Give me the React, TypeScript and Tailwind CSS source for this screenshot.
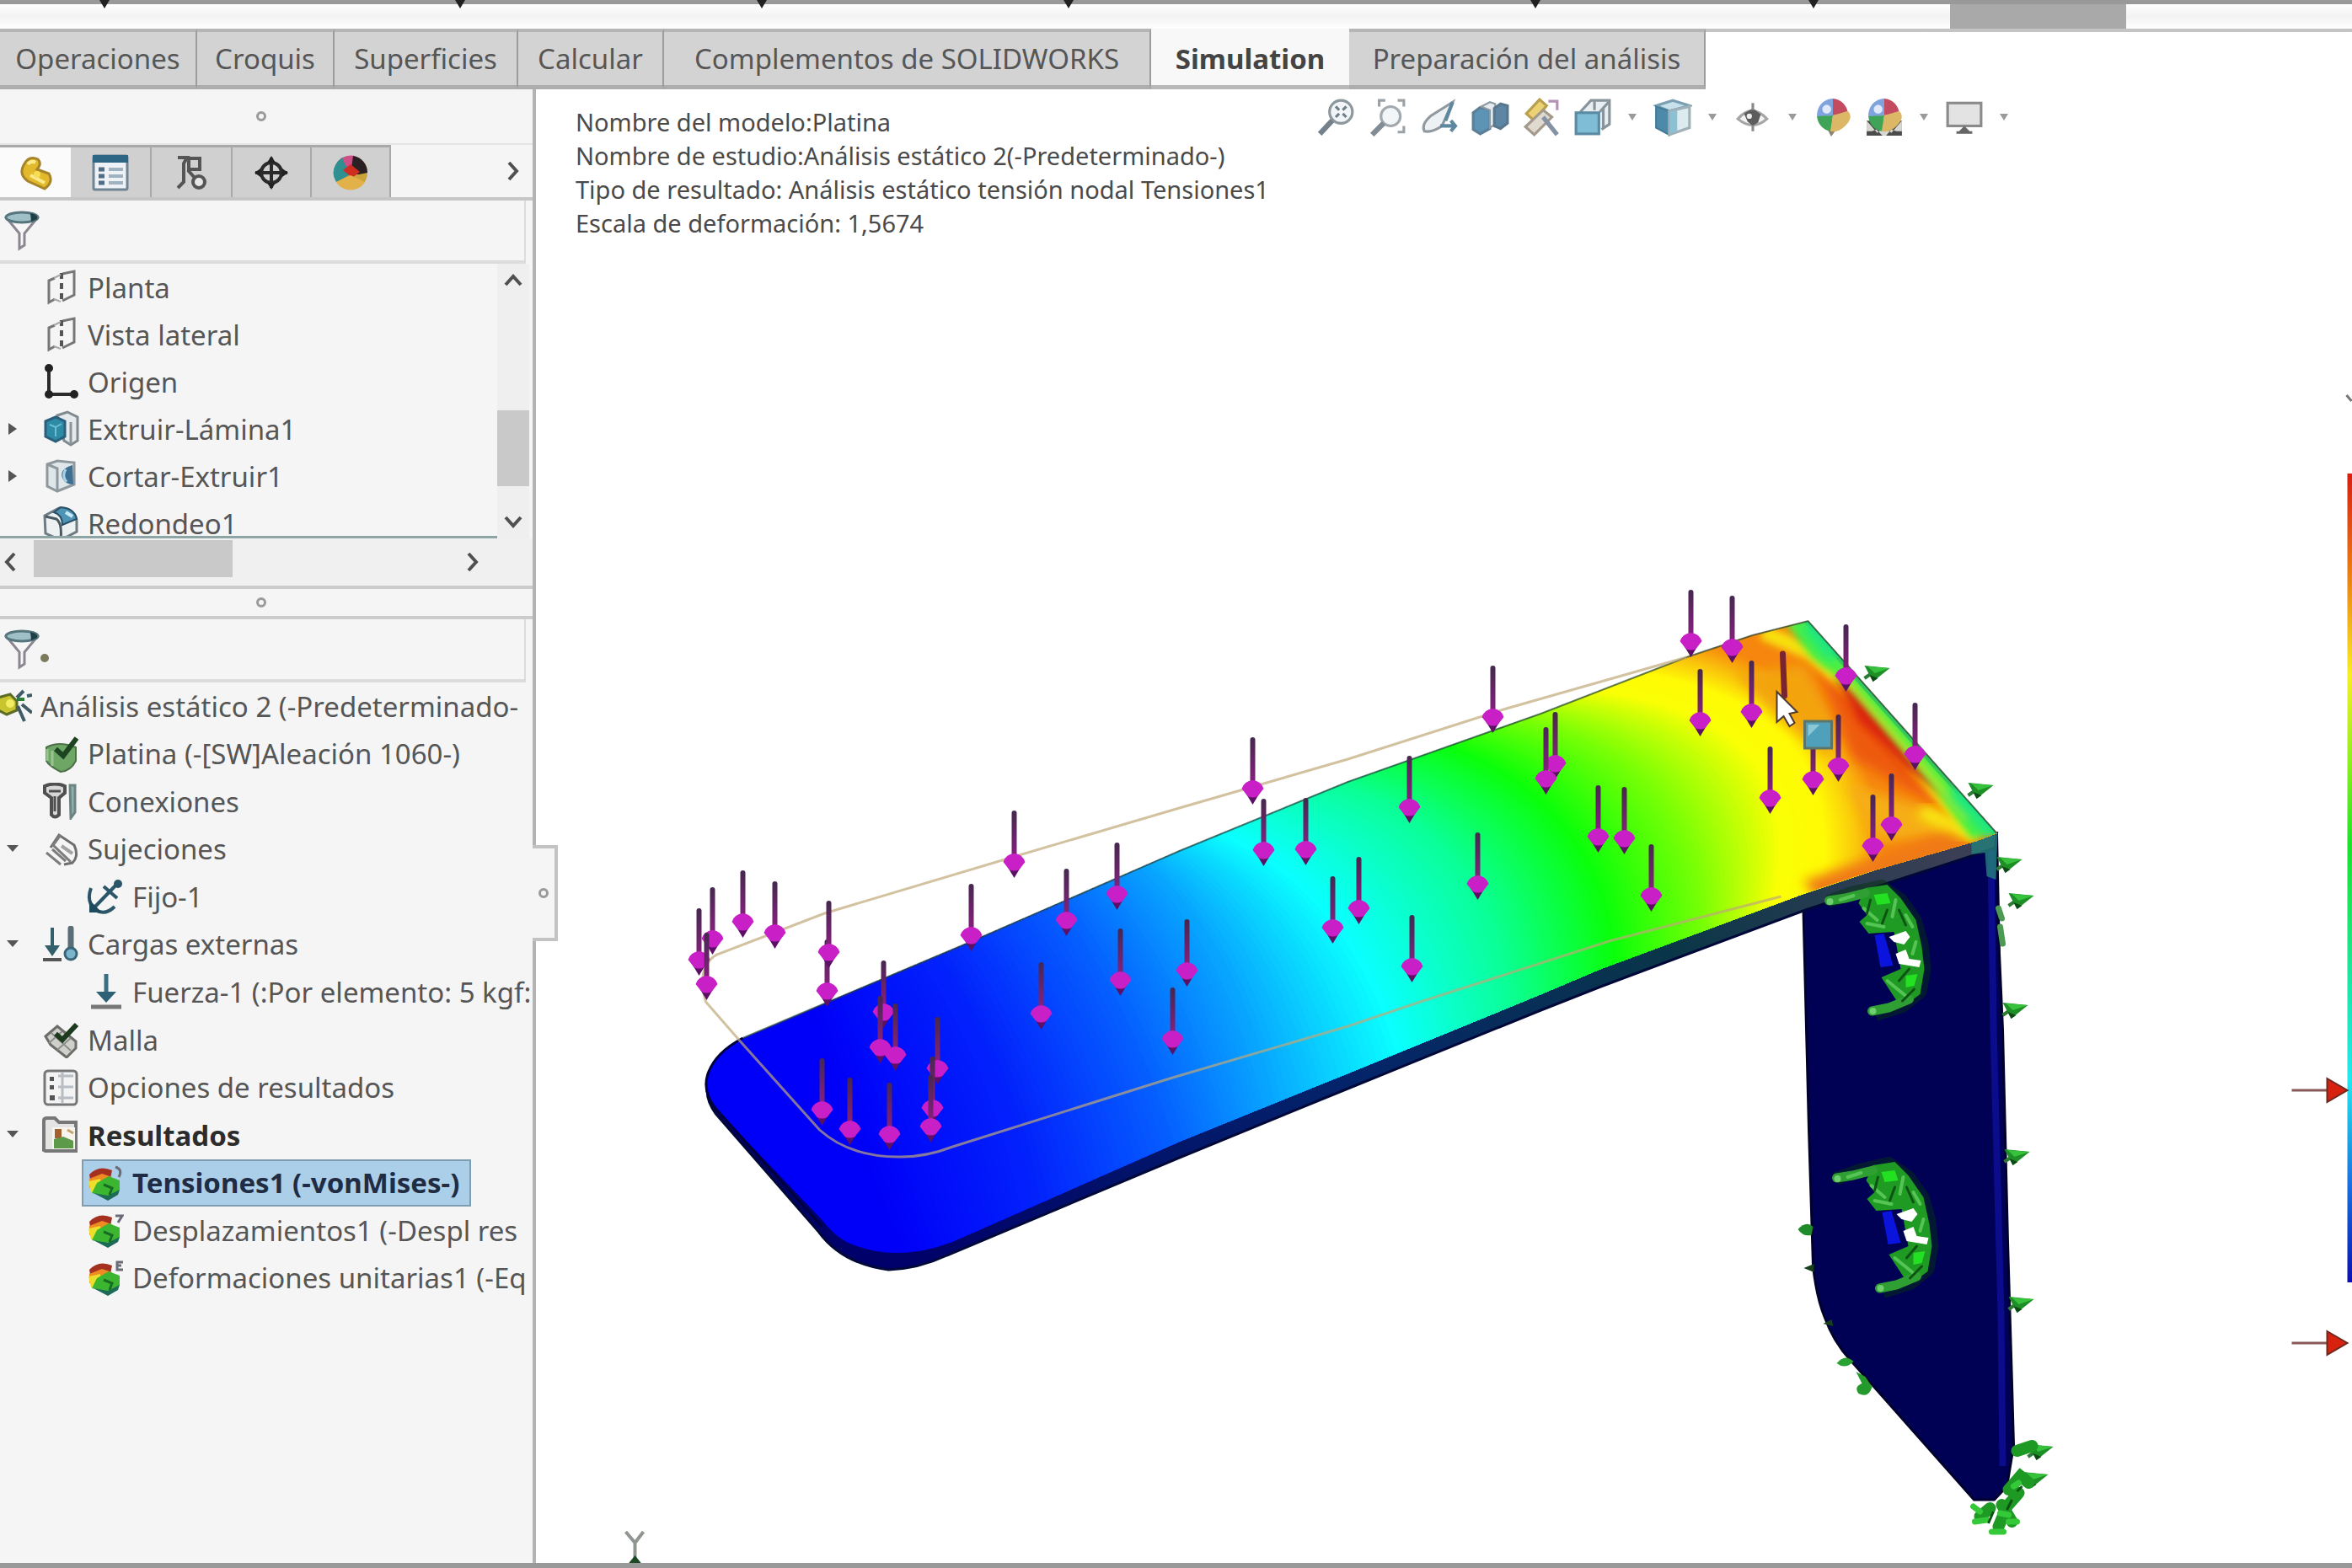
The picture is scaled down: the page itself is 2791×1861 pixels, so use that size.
import type { ReactNode } from "react";

const tabs = [
  { label: "Operaciones", width: "w-[234px]" },
  { label: "Croquis", width: "w-[163px]" },
  { label: "Superficies", width: "w-[218px]" },
  { label: "Calcular", width: "w-[173px]" },
  { label: "Complementos de SOLIDWORKS", width: "w-[578px]" },
  { label: "Simulation", width: "w-[235px]", active: true },
  { label: "Preparación del análisis", width: "w-[423px]" },
];

function Icon({ children, className = "size-11" }: { children: ReactNode; className?: string }) {
  return (
    <svg viewBox="0 0 44 44" className={className + " shrink-0"} fill="none" aria-hidden="true">
      {children}
    </svg>
  );
}

/* ---------- tree icons ---------- */

const PlaneIcon = () => (
  <Icon>
    <path d="M15 11 L8 14 V40 L15 36" stroke="#777" strokeWidth="3" />
    <path d="M24 6 L38 3 V31 L24 38" stroke="#777" strokeWidth="3" />
    <path d="M23 5 V40" stroke="#555" strokeWidth="4" strokeDasharray="7 5" />
    <path d="M14 11 L22 7 M14 36 L22 39" stroke="#aaa" strokeWidth="2" />
  </Icon>
);

const OriginIcon = () => (
  <Icon>
    <path d="M8 5 V37 H38" stroke="#2b2b2b" strokeWidth="4" />
    <circle cx="8" cy="6" r="5" fill="#222" />
    <circle cx="8" cy="37" r="5" fill="#222" />
    <circle cx="38" cy="37" r="5" fill="#222" />
  </Icon>
);

const ExtrudeIcon = () => (
  <Icon>
    <path d="M18 6 L30 2 L42 8 V36 L34 41 L26 36 Z" fill="#e6eaec" stroke="#7f898e" strokeWidth="3" />
    <path d="M34 14 V40" stroke="#8b9499" strokeWidth="3" />
    <path d="M4 13 L16 8 L27 13 V31 L16 37 L4 31 Z" fill="#2f8aa6" stroke="#2a5f7c" strokeWidth="3" />
    <path d="M9 17 L16 20 L23 16 M16 20 V31" stroke="#6cc0d4" strokeWidth="2" />
  </Icon>
);

const CutIcon = () => (
  <Icon>
    <path d="M6 8 L18 4 L38 6 V32 L18 40 L6 34 Z" fill="#dfe6ea" stroke="#8e989d" strokeWidth="3" />
    <path d="M6 8 L18 13 V40" stroke="#8e989d" strokeWidth="3" />
    <path d="M36 9 Q20 14 24 24 Q27 32 37 32 Z" fill="#3e6f93" />
    <path d="M28 14 Q23 22 29 29" stroke="#a8d3e6" strokeWidth="3" />
  </Icon>
);

const FilletIcon = () => (
  <Icon>
    <path d="M3 13 L20 4 Q42 6 41 22 V32 L22 42 L4 34 Z" fill="#eef1f2" stroke="#6f7b82" strokeWidth="3" />
    <path d="M14 9 Q24 12 24 24 L41 17 Q38 4 22 3 Z" fill="#4f93b5" stroke="#284e66" strokeWidth="2" />
    <path d="M4 14 L17 17 Q24 22 22 41" stroke="#4a5a63" strokeWidth="3" />
    <path d="M28 9 L36 14" stroke="#c6e8f7" strokeWidth="4" />
  </Icon>
);

const StudyIcon = () => (
  <Icon>
    <path d="M4 12 L18 8 L26 16 V27 L14 32 L4 27 Z" fill="#c9c52e" stroke="#5c6b25" strokeWidth="3" />
    <circle cx="18" cy="19" r="5" fill="#f1ee64" />
    <path d="M26 12 L34 4 M38 10 L44 9 M27 22 L35 40 M32 20 L44 30" stroke="#3f5d66" strokeWidth="4" />
    <path d="M26 14 H35" stroke="#2e7f3c" strokeWidth="4" />
  </Icon>
);

const PartIcon = () => (
  <Icon>
    <path d="M5 14 Q20 6 40 14 V30 Q34 42 22 43 Q8 36 5 30 Z" fill="#6ea765" stroke="#4d6f4a" strokeWidth="2" />
    <path d="M6 16 V30 M12 18 V36" stroke="#9cc492" strokeWidth="3" />
    <path d="M16 16 L25 24 L41 3" stroke="#1d4420" strokeWidth="6" />
  </Icon>
);

const ConnectIcon = () => (
  <Icon>
    <path d="M3 4 Q15 -1 27 4 V12 L20 18 V38 Q15 43 11 38 V18 L3 12 Z" fill="#d7d7d7" stroke="#505050" strokeWidth="4" />
    <path d="M8 10 H22 M15 16 V34" stroke="#505050" strokeWidth="3" />
    <path d="M33 3 H39 V35 L34 42 Z" fill="#8fb0ad" stroke="#6d8582" strokeWidth="3" />
  </Icon>
);

const FixturesIcon = () => (
  <Icon>
    <path d="M10 20 L20 5 L38 17 Q44 30 36 38 L26 40" stroke="#6f6f6f" strokeWidth="3" />
    <path d="M22 5 L13 17 L34 37 M5 26 L22 40 M12 22 L28 36" stroke="#7d7d7d" strokeWidth="3" />
    <path d="M23 18 L36 27" stroke="#a3a3a3" strokeWidth="4" />
  </Icon>
);

const FixedIcon = () => (
  <Icon>
    <path d="M37 6 L8 36" stroke="#2b5568" strokeWidth="4" />
    <path d="M20 10 L36 24" stroke="#2b5568" strokeWidth="4" />
    <circle cx="37" cy="7" r="5" fill="#2b5568" />
    <path d="M5 12 Q-1 28 10 38 Q22 45 33 34" stroke="#2b5568" strokeWidth="4" />
    <path d="M3 26 V41 H18 Z" fill="#1f4a5c" />
  </Icon>
);

const LoadsIcon = () => (
  <Icon>
    <path d="M12 2 V28" stroke="#33606b" strokeWidth="4" />
    <path d="M3 23 H21 L12 36 Z" fill="#33606b" />
    <path d="M1 40 H23" stroke="#555" strokeWidth="4" />
    <path d="M34 3 V26" stroke="#5b6d75" strokeWidth="7" strokeLinecap="round" />
    <circle cx="34" cy="33" r="7" fill="#7bb5cc" stroke="#3a6478" strokeWidth="3" />
  </Icon>
);

const ForceIcon = () => (
  <Icon>
    <path d="M23 1 V26" stroke="#3a6f83" strokeWidth="5" />
    <path d="M11 22 H35 L23 35 Z" fill="#2d6175" />
    <path d="M5 40 H41" stroke="#777" strokeWidth="5" />
  </Icon>
);

const MeshIcon = () => (
  <Icon>
    <path d="M4 18 L18 6 L40 24 V32 L29 43 L10 28 Z" fill="#cfd0cc" stroke="#6c6d69" strokeWidth="3" />
    <path d="M11 14 L34 35 M8 26 L24 12 M18 34 L34 20" stroke="#8c8d88" strokeWidth="2" />
    <path d="M16 15 L24 22 L41 4" stroke="#1c3a1c" strokeWidth="6" />
  </Icon>
);

const OptionsIcon = () => (
  <Icon>
    <rect x="3" y="2" width="38" height="40" rx="4" fill="#f3f3f3" stroke="#777" strokeWidth="3" />
    <path d="M19 8 H37 M19 21 H37 M19 34 H37 M24 4 V40" stroke="#b7bdc2" strokeWidth="3" />
    <path d="M9 9 H14 V14 H9 Z M9 19 H14 V24 H9 Z M9 31 H15 V37 H9 Z" fill="#555" />
  </Icon>
);

const ResultsIcon = () => (
  <Icon>
    <path d="M2 40 V5 Q2 2 6 2 H15 L20 7 H40 V41 H4 Z" fill="#e4e4e4" stroke="#777" strokeWidth="4" />
    <path d="M12 13 H39 V39 H12 Z" fill="#f7f5ee" />
    <path d="M15 15 H23 V26 H15 Z" fill="#a5602f" />
    <path d="M14 27 L25 24 L37 29 V38 H14 Z" fill="#5d9a4a" />
    <path d="M30 16 L37 20" stroke="#c7a36d" strokeWidth="3" />
  </Icon>
);

const PlotIcon = ({ mark }: { mark: string }) => (
  <Icon>
    <path d="M3 12 Q14 0 30 7 L28 17 L4 18 Z" fill="#a5301f" />
    <path d="M3 17 L18 11 L30 15 L22 24 L3 28 Z" fill="#ee8b22" />
    <path d="M2 20 L16 17 L18 31 L5 33 Z" fill="#ecdf2c" />
    <path d="M12 22 L26 14 L39 19 V31 L25 38 L6 34 Z" fill="#3cb631" />
    <path d="M8 34 L25 37 L39 30 L37 36 L25 43 Z" fill="#1d6a56" />
    <path d="M20 24 L30 28 L27 36" stroke="#176b23" strokeWidth="3" />
    <path d={mark} stroke="#6b6b78" strokeWidth="3" />
  </Icon>
);

/* ---------- feature manager tab icons ---------- */

const Ball = ({ scene = false }: { scene?: boolean }) => (
  <Icon className="size-[46px]">
    {scene && <path d="M2 26 H42 V43 H2 Z" fill="#4c4c4c" />}
    {scene && <path d="M2 26 L14 40 L22 33 L30 40 L42 26 V38 H36 L30 36 L24 43 H20 L13 36 L8 38 H2 Z" fill="#d8d8d2" />}
    {!scene && <path d="M16 36 L20 44 L26 36 Z" fill="#8a8272" />}
    <path d="M22 20 L22 1 A18 19 0 0 0 4 22 Z" fill="#7fa3dd" />
    <path d="M22 20 V1 A18 19 0 0 1 39 17 Z" fill="#c24b5f" />
    <path d="M22 20 L4 21 A18 18 0 0 0 20 38 Z" fill="#3fa457" />
    <path d="M22 20 L39 15 Q46 22 36 32 Q28 40 19 38 Z" fill="#dcb866" />
    <circle cx="15" cy="13" r="5" fill="#dfe9fb" />
  </Icon>
);

function Chevron({ d }: { d: string }) {
  return (
    <svg viewBox="0 0 24 24" className="size-6 shrink-0" fill="none" aria-hidden="true">
      <path d={d} stroke="#505050" strokeWidth="4" />
    </svg>
  );
}

function Funnel() {
  return (
    <svg viewBox="0 0 44 50" className="h-[50px] w-11 shrink-0" fill="none" aria-hidden="true">
      <path d="M4 10 L19 28 V46 L25 42 V28 L40 10 Z" fill="#f7f7f8" stroke="#8b8692" strokeWidth="3" />
      <ellipse cx="22" cy="9" rx="19" ry="6" fill="#9fc0c6" stroke="#56757d" strokeWidth="3" />
      <path d="M32 4 Q42 6 40 11 L33 14 Z" fill="#1f3f45" />
    </svg>
  );
}

function Grip() {
  return <span className="size-3 rounded-full border-[3px] border-[#9a9a9a]" />;
}

const managerTabs = [
  {
    name: "Árbol de operaciones",
    width: "w-[84px]",
    icon: (
      <Icon>
        <path d="M8 13 Q14 1 25 6 Q30 11 24 18 L38 23 Q44 33 33 41 L13 32 Q2 24 8 13 Z" fill="#e3b92c" stroke="#a5842a" strokeWidth="3" />
        <path d="M13 12 Q17 7 22 10 M16 25 L33 34" stroke="#fbe98a" strokeWidth="4" />
        <circle cx="24" cy="24" r="4" fill="#f7dd55" />
      </Icon>
    ),
  },
  {
    name: "Propiedades",
    width: "w-[96px]",
    icon: (
      <Icon>
        <rect x="2" y="2" width="40" height="40" rx="2" fill="#eef2f6" stroke="#6e8394" strokeWidth="3" />
        <path d="M1 1 H43 V10 H1 Z" fill="#2d6685" />
        <path d="M8 18 H15 M8 26 H15 M8 34 H15" stroke="#4e6d88" strokeWidth="5" />
        <path d="M20 18 H37 M20 26 H37 M20 34 H37" stroke="#9fb2c1" strokeWidth="4" />
      </Icon>
    ),
  },
  {
    name: "Configuraciones",
    width: "w-[96px]",
    icon: (
      <Icon>
        <path d="M6 4 H17 L13 11 V33 L6 40" stroke="#555" strokeWidth="4" />
        <path d="M19 5 H32 V18 H19 Z" stroke="#555" strokeWidth="4" />
        <path d="M18 19 L26 28" stroke="#555" strokeWidth="4" />
        <circle cx="31" cy="33" r="7" stroke="#555" strokeWidth="4" fill="#e8e8e8" />
      </Icon>
    ),
  },
  {
    name: "Cotas",
    width: "w-[94px]",
    icon: (
      <Icon>
        <circle cx="22" cy="22" r="12" stroke="#2b2b2b" strokeWidth="4" />
        <path d="M22 4 V40 M3 22 H41" stroke="#2b2b2b" strokeWidth="4" />
        <path d="M22 2 L27 10 H17 Z M22 42 L27 34 H17 Z M2 22 L9 17 V27 Z M42 22 L35 17 V27 Z" fill="#222" />
      </Icon>
    ),
  },
  {
    name: "Apariencias",
    width: "w-[94px]",
    icon: (
      <Icon>
        <circle cx="22" cy="22" r="20" fill="#c9a23a" />
        <path d="M22 24 V2 A20 20 0 0 0 5 33 Z" fill="#2f8f91" />
        <path d="M22 24 L12 5 A20 20 0 0 1 27 2 Z" fill="#cf4f86" />
        <path d="M22 24 L25 2 A20 20 0 0 1 42 22 L32 24 Z" fill="#2a2023" />
        <path d="M13 19 L22 12 L33 21 L24 28 Z" fill="#cf2c22" />
        <path d="M5 33 A20 20 0 0 0 39 33 L22 25 Z" fill="#e3b14a" />
      </Icon>
    ),
  },
];

/* ---------- trees ---------- */

type Node = {
  label: string;
  level: 0 | 1 | 2;
  icon: ReactNode;
  arrow?: "right" | "down";
  bold?: boolean;
  selected?: boolean;
};

const features: Node[] = [
  { label: "Planta", level: 1, icon: <PlaneIcon /> },
  { label: "Vista lateral", level: 1, icon: <PlaneIcon /> },
  { label: "Origen", level: 1, icon: <OriginIcon /> },
  { label: "Extruir-Lámina1", level: 1, icon: <ExtrudeIcon />, arrow: "right" },
  { label: "Cortar-Extruir1", level: 1, icon: <CutIcon />, arrow: "right" },
  { label: "Redondeo1", level: 1, icon: <FilletIcon /> },
];

const study: Node[] = [
  { label: "Análisis estático 2 (-Predeterminado-", level: 0, icon: <StudyIcon /> },
  { label: "Platina (-[SW]Aleación 1060-)", level: 1, icon: <PartIcon /> },
  { label: "Conexiones", level: 1, icon: <ConnectIcon /> },
  { label: "Sujeciones", level: 1, icon: <FixturesIcon />, arrow: "down" },
  { label: "Fijo-1", level: 2, icon: <FixedIcon /> },
  { label: "Cargas externas", level: 1, icon: <LoadsIcon />, arrow: "down" },
  { label: "Fuerza-1 (:Por elemento: 5 kgf:", level: 2, icon: <ForceIcon /> },
  { label: "Malla", level: 1, icon: <MeshIcon /> },
  { label: "Opciones de resultados", level: 1, icon: <OptionsIcon /> },
  { label: "Resultados", level: 1, icon: <ResultsIcon />, arrow: "down", bold: true },
  { label: "Tensiones1 (-vonMises-)", level: 2, icon: <PlotIcon mark="M34 3 Q43 6 38 15" />, bold: true, selected: true },
  { label: "Desplazamientos1 (-Despl res", level: 2, icon: <PlotIcon mark="M34 5 H42 L37 13" /> },
  { label: "Deformaciones unitarias1 (-Eq", level: 2, icon: <PlotIcon mark="M43 3 H36 V12 H43 M36 7 H41" /> },
];

const indent = { 0: "-ml-3", 1: "ml-0", 2: "ml-[53px]" };

function Tree({ nodes, name, className }: { nodes: Node[]; name: string; className: string }) {
  return (
    <ul aria-label={name} className={"grid auto-rows-fr " + className}>
      {nodes.map((n) => (
        <li key={n.label} className="flex items-center">
          {n.level > 0 && (
            <span className="flex w-11 shrink-0 items-center pl-2">
              {n.arrow && (
                <svg viewBox="0 0 16 16" className="size-4" aria-hidden="true">
                  <path d={n.arrow === "right" ? "M2 1 L12 8 L2 15 Z" : "M0 3 H14 L7 11 Z"} fill="#555" />
                </svg>
              )}
            </span>
          )}
          <button
            type="button"
            className={
              "flex h-14 items-center gap-2.5 border-2 pl-1 text-[33px] leading-none whitespace-nowrap " +
              indent[n.level] +
              (n.selected ? " border-[#7f9db1] bg-[#abcfe9] pr-3 text-[#1f2c44]" : " border-transparent") +
              (n.bold ? " font-bold" : "") +
              (n.bold && !n.selected ? " text-[#2c2c2c]" : "")
            }
          >
            {n.icon}
            <span>{n.label}</span>
          </button>
        </li>
      ))}
    </ul>
  );
}

/* ---------- heads-up view toolbar ---------- */

const viewTools: { name: string; icon?: ReactNode; menu?: boolean }[] = [
  {
    name: "Zoom para ajustar",
    icon: (
      <Icon className="size-[46px]">
        <circle cx="28" cy="16" r="13" fill="#f1f5f8" stroke="#8d979e" strokeWidth="3" />
        <path d="M18 26 L4 41" stroke="#75818a" strokeWidth="6" />
        <path d="M22 10 L34 22 M34 10 L22 22" stroke="#6f7d86" strokeWidth="3" />
        <path d="M28 12 L32 16 L28 20 L24 16 Z" fill="#f5f8fa" />
      </Icon>
    ),
  },
  {
    name: "Zoom encuadre",
    icon: (
      <Icon className="size-[46px]">
        <circle cx="26" cy="21" r="11" fill="#f3f6f8" stroke="#a2aab0" strokeWidth="3" />
        <path d="M18 29 L5 42" stroke="#828c94" strokeWidth="6" />
        <path d="M13 10 V3 H20 M34 3 H41 V10 M41 32 V39 H34" stroke="#9aa2a8" strokeWidth="3" />
      </Icon>
    ),
  },
  {
    name: "Vista previa",
    icon: (
      <Icon className="size-[46px]">
        <path d="M38 5 L14 20 Q2 30 6 38 Q14 40 26 32 Z" fill="#eef1f3" stroke="#9099a0" strokeWidth="3" />
        <path d="M38 5 L30 26 M24 32 H41 M36 26 L41 32 L36 38" stroke="#5e87a0" strokeWidth="4" />
      </Icon>
    ),
  },
  {
    name: "Vista de sección",
    icon: (
      <Icon className="size-[46px]">
        <path d="M3 17 L11 11 L22 13 V35 L11 41 L3 36 Z" fill="#5d93b4" stroke="#5b7f97" strokeWidth="3" />
        <path d="M12 10 L22 5 L28 7 V30 L22 34 V14 Z" fill="#e4eaee" stroke="#8e9aa2" strokeWidth="2" />
        <path d="M27 12 L34 7 L42 9 V29 L34 35 L27 32 Z" fill="#5c86a4" stroke="#58778e" strokeWidth="3" />
      </Icon>
    ),
  },
  {
    name: "Vistas de anotaciones",
    icon: (
      <Icon className="size-[46px]">
        <path d="M5 18 L20 2 L28 9 L14 26 Z" fill="#ecd272" stroke="#b99f4e" strokeWidth="3" />
        <path d="M4 33 L24 14 L34 22 L14 42 Z" fill="#dfd9d0" stroke="#a49a8c" strokeWidth="3" />
        <path d="M24 22 L40 42" stroke="#8591a5" strokeWidth="5" />
        <path d="M30 4 H40 V14" stroke="#b492b4" strokeWidth="3" />
      </Icon>
    ),
  },
  {
    name: "Orientación de vista",
    menu: true,
    icon: (
      <Icon className="size-[46px]">
        <path d="M8 16 L20 3 H41 V30 L32 36" fill="#e9eef1" stroke="#88949c" strokeWidth="3" />
        <path d="M24 4 V14 M41 4 L30 16 M34 12 V34" stroke="#88949c" strokeWidth="3" />
        <rect x="3" y="17" width="26" height="24" fill="#7fbdd6" stroke="#5b8aa3" strokeWidth="3" />
      </Icon>
    ),
  },
  {
    name: "Estilo de visualización",
    menu: true,
    icon: (
      <Icon className="size-[46px]">
        <path d="M3 9 L22 3 L41 9 L18 15 Z" fill="#c7e2ec" stroke="#7ba0b2" strokeWidth="3" />
        <path d="M3 10 L18 15 V42 L3 34 Z" fill="#4d8aaa" stroke="#467b98" strokeWidth="2" />
        <path d="M18 15 L41 10 V34 L18 42 Z" fill="#dcebf0" stroke="#9fb0b8" strokeWidth="3" />
        <path d="M19 16 L27 14 V38 L19 41 Z" fill="#8cc0d4" />
      </Icon>
    ),
  },
  {
    name: "Ocultar o mostrar",
    menu: true,
    icon: (
      <Icon className="size-[46px]">
        <path d="M5 24 Q21 6 38 24 Q22 38 5 24 Z" fill="#f4f4f4" stroke="#a5a5a5" strokeWidth="3" />
        <path d="M12 18 L22 12 L31 19 L28 28 L22 32 L16 27 Z" fill="#5c5c5c" />
        <path d="M22 6 V14 M22 31 V38" stroke="#8a8a8a" strokeWidth="3" />
        <circle cx="18" cy="21" r="3" fill="#eee" />
      </Icon>
    ),
  },
  { name: "Editar apariencia", icon: <Ball /> },
  { name: "Aplicar escena", icon: <Ball scene />, menu: true },
  {
    name: "Configuración de vista",
    menu: true,
    icon: (
      <Icon className="size-[46px]">
        <rect x="3" y="6" width="38" height="26" fill="#e3e3e3" stroke="#8b8b8b" strokeWidth="3" />
        <path d="M22 32 L28 38 H16 Z M13 38 H31 V41 H13 Z" fill="#666" />
      </Icon>
    ),
  },
];

/* ---------- stress plot ---------- */

// Iso-stress lines: top point, middle point, bottom point, colour.
const isoKeys: number[][] = [
  [960, 1200, 1010, 1350, 1080, 1520, 0, 0, 248],
  [1110, 1138, 1190, 1290, 1230, 1450, 2, 34, 252],
  [1250, 1075, 1330, 1210, 1395, 1380, 5, 95, 255],
  [1360, 1030, 1450, 1150, 1510, 1330, 8, 165, 255],
  [1450, 992, 1580, 1095, 1660, 1260, 10, 255, 255],
  [1590, 935, 1730, 1030, 1790, 1205, 10, 255, 150],
  [1720, 888, 1860, 990, 1915, 1150, 10, 255, 10],
  [1800, 855, 1960, 940, 2020, 1110, 120, 255, 5],
  [1900, 822, 2080, 905, 2100, 1080, 250, 255, 5],
  [1950, 800, 2125, 885, 2160, 1062, 255, 250, 5],
  [1995, 785, 2160, 880, 2200, 1050, 250, 200, 12],
  [2040, 765, 2190, 870, 2240, 1036, 246, 130, 14],
];

const STEPS = 20;
const bands = isoKeys.slice(0, -1).flatMap((a, i) =>
  Array.from({ length: STEPS }, (_, s) => {
    const b = isoKeys[i + 1];
    const v = a.map((x, k) => Math.round(x + ((b[k] - x) * s) / STEPS));
    const [tx, ty, mx, my, bx, by, r, g, bl] = v;
    const cx = 2 * mx - (tx + bx) / 2;
    const cy = 2 * my - (ty + by) / 2;
    return {
      d: `M${tx - 60} ${ty - 120} L${tx} ${ty} Q${cx} ${cy} ${bx} ${by} L${bx + 10} ${by + 120} H2600 V500 Z`,
      fill: `rgb(${r},${g},${bl})`,
    };
  }),
);

const forces: number[][] = [
  [846, 1131], [830, 1156], [882, 1111], [920, 1124], [839, 1185], [982, 1193], [984, 1147],
  [1049, 1218], [1045, 1260], [1063, 1269], [1113, 1285], [1107, 1332], [1105, 1354],
  [976, 1334], [1009, 1357], [1056, 1363], [1153, 1127], [1204, 1040], [1266, 1109],
  [1326, 1078], [1487, 953], [1500, 1026], [1550, 1025], [1582, 1118], [1330, 1180],
  [1409, 1169], [1236, 1220], [1392, 1250], [1613, 1095], [1673, 975], [1676, 1164],
  [1754, 1066], [1772, 868], [1846, 923], [1835, 941], [1897, 1010], [1928, 1012],
  [1960, 1080], [2007, 778], [2056, 785], [2018, 872], [2079, 862], [2101, 964],
  [2152, 942], [2182, 926], [2191, 819], [2273, 912], [2245, 996], [2223, 1021],
];

const cones: number[][] = [
  [2227, 798], [2350, 937], [2384, 1025], [2398, 1068], [2391, 1198], [2393, 1372], [2398, 1547],
  [2421, 1722], [2415, 1755],
];

function Clamp({ dx, dy }: { dx: number; dy: number }) {
  return (
    <g transform={`translate(${dx} ${dy})`}>
      <path d="M2170 1070 L2198 1060 L2233 1052 L2256 1068 L2273 1092 L2281 1120 L2284 1150 L2279 1177 L2258 1194 L2226 1204" stroke="#06300f" strokeWidth="16" fill="none" strokeLinejoin="round" opacity="0.5" />
      <path d="M2225 1110 L2236 1108 L2247 1146 L2232 1148 Z" fill="#0b14dd" />
      <path d="M2206 1072 L2214 1054 L2240 1050 L2256 1066 L2274 1092 L2281 1124 L2284 1150 L2279 1180 L2260 1194 L2250 1186 L2233 1160 L2256 1150 L2248 1106 L2218 1108 L2207 1094 L2216 1086 Z" fill="#1f9a22" />
      <path d="M2171 1069 L2190 1066 L2214 1060" stroke="#2f9e33" strokeWidth="11" fill="none" strokeLinecap="round" />
      <path d="M2222 1200 L2242 1196 L2266 1186" stroke="#2f9e33" strokeWidth="11" fill="none" strokeLinecap="round" />
      <path d="M2242 1112 L2262 1105 L2267 1112 L2260 1121 L2248 1118 Z M2250 1132 L2262 1127 L2266 1138 L2280 1140 L2278 1148 L2254 1144 Z" fill="#fff" />
      <path d="M2224 1062 L2240 1060 L2244 1072 L2228 1074 Z M2262 1158 L2276 1156 L2272 1170 L2262 1172 Z" fill="#24e022" />
      <path d="M2212 1078 L2228 1092 M2250 1068 L2246 1088 M2262 1086 L2270 1100 M2216 1096 L2236 1100 M2240 1164 L2262 1182 M2274 1118 L2270 1132 M2184 1068 L2200 1063" stroke="#55c455" strokeWidth="4" strokeLinecap="round" />
      <path d="M2220 1068 L2216 1084 M2240 1080 L2234 1096 M2254 1080 L2262 1098 M2266 1150 L2254 1164 M2272 1174 L2258 1188" stroke="#0d5414" strokeWidth="3" strokeLinecap="round" />
      <circle cx="2223" cy="1200" r="4" fill="#6fce6f" />
      <circle cx="2172" cy="1070" r="4" fill="#6fce6f" />
    </g>
  );
}

const plateTop =
  "M882 1232 L979 1191 L1152 1118 L1400 1010 L1600 928 L1829 847 L2002 780 L2080 754 L2146 737 L2370 989 L2346 998 L2221 1034 L2143 1060 L1900 1150 L1829 1180 L1600 1274 L1400 1355 L1130 1474 Q1060 1500 1005 1474 Q990 1466 976 1448 L850 1316 Q834 1296 840 1276 Q848 1250 882 1232 Z";

function StressPlot() {
  return (
    <svg
      viewBox="637 106 2154 1749"
      className="absolute inset-0 size-full"
      fill="none"
      role="img"
      aria-label="Tensiones de von Mises en la platina"
    >
      <defs>
        <clipPath id="plate">
          <path d={plateTop} />
        </clipPath>
        <filter id="soft" x="-30%" y="-30%" width="160%" height="160%">
          <feGaussianBlur stdDeviation="7" />
        </filter>
        <filter id="fine" x="-30%" y="-30%" width="160%" height="160%">
          <feGaussianBlur stdDeviation="4" />
        </filter>
        <linearGradient id="legend" x1="0" y1="0" x2="0" y2="1">
          <stop offset="0" stopColor="#d81e10" />
          <stop offset="0.14" stopColor="#ee8a12" />
          <stop offset="0.25" stopColor="#f8f020" />
          <stop offset="0.36" stopColor="#8af01c" />
          <stop offset="0.46" stopColor="#18e428" />
          <stop offset="0.62" stopColor="#18e8a0" />
          <stop offset="0.75" stopColor="#20e8f0" />
          <stop offset="0.88" stopColor="#1670e0" />
          <stop offset="1" stopColor="#0a10b0" />
        </linearGradient>
        <linearGradient id="side" gradientUnits="userSpaceOnUse" x1="1060" y1="1500" x2="2300" y2="1010">
          <stop offset="0" stopColor="#00006a" />
          <stop offset="0.45" stopColor="#04256a" />
          <stop offset="0.75" stopColor="#0a3648" />
          <stop offset="1" stopColor="#3a3f55" />
        </linearGradient>
        <linearGradient id="shaft" x1="0" y1="0" x2="0" y2="1">
          <stop offset="0" stopColor="#45284f" />
          <stop offset="1" stopColor="#8a1f80" />
        </linearGradient>
        <g id="force">
          <rect x="-3" y="-80" width="6" height="58" rx="3" fill="url(#shaft)" />
          <path d="M-12 -20 L0 0 L12 -20 Z" fill="#5c1064" />
          <path d="M-13 -19 Q-10 -28 0 -29 Q10 -28 13 -19 L6 -10 Q0 -7 -6 -10 Z" fill="#c81fc6" />
        </g>
        <g id="cone">
          <path d="M-14 7 L-4 0" stroke="#2f7a35" strokeWidth="4" />
          <path d="M-14 -8 L16 -5 L-4 11 Z" fill="#1d8f26" />
          <path d="M-10 -7 L16 -5 L-2 1 Z" fill="#37c23c" />
          <path d="M-8 3 L-4 11 L2 7 Z" fill="#0f4a16" />
        </g>
      </defs>

      {/* vertical leg */}
      <path
        d="M2140 1060 L2147 1340 L2152 1502 Q2156 1540 2166 1564 Q2176 1592 2196 1614 L2227 1649 L2343 1780 L2367 1780 L2382 1764 L2390 1716 L2388 1643 L2383 1474 L2377 1222 L2373 1132 L2370 990 Z"
        fill="#000055"
        stroke="#00002c"
        strokeWidth="3"
      />
      <path d="M2363 1010 L2366 1220 L2375 1560 L2377 1740" stroke="#0a0c8c" strokeWidth="8" />

      {/* plate thickness */}
      <path
        d="M840 1290 Q838 1306 850 1322 L972 1462 Q1000 1500 1055 1507 Q1090 1506 1124 1490 L1400 1374 L1600 1292 L1829 1199 L1900 1171 L2143 1080 L2346 1014 L2368 1006 L2370 989 L2143 1050 L1400 1340 L1060 1470 Z"
        fill="url(#side)"
        stroke="#000838"
        strokeWidth="3"
      />
      <path d="M2340 1000 L2371 989 L2369 1044 L2358 1040 L2356 1012 L2340 1014 Z" fill="#26807a" opacity="0.8" />

      {/* stress field */}
      <g clipPath="url(#plate)">
        <path d="M800 700 H2400 V1560 H800 Z" fill="#0000f8" />
        {bands.map((b, i) => (
          <path key={i} d={b.d} fill={b.fill} />
        ))}
        <path d="M2060 800 L2140 790 L2180 860 L2170 900 L2110 850 Z" fill="#f3a410" filter="url(#soft)" />
        <path d="M2190 930 L2290 960 L2320 990 L2230 1000 Z" fill="#f6ae12" filter="url(#soft)" />
        <path d="M2140 1046 L2300 990 L2340 980 L2320 1016 L2160 1070 Z" fill="#f07a12" filter="url(#soft)" />
        <path d="M2155 785 L2200 815 L2330 970 L2260 935 L2200 900 Z" fill="#ee5a0c" filter="url(#soft)" />
        <path d="M2092 750 L2150 775 L2200 822 L2346 994" stroke="#f8e010" strokeWidth="18" filter="url(#fine)" />
        <path d="M2176 802 L2206 820 L2316 950 L2262 912 L2206 856 Z" fill="#dd2408" filter="url(#fine)" />
        <path d="M2280 962 L2340 990" stroke="#f8f010" strokeWidth="16" filter="url(#soft)" />
        <path d="M2116 735 L2146 735 L2370 985 L2340 996 L2292 930 L2196 816 L2150 780 Z" fill="#4df03c" filter="url(#fine)" />
        <path d="M2190 806 L2336 972" stroke="#d8e428" strokeWidth="5" filter="url(#fine)" />
        <path d="M2146 735 L2370 987" stroke="#35c85c" strokeWidth="12" />
        <path d="M2146 738 L2180 780 M2320 935 L2368 990" stroke="#1ee880" strokeWidth="22" filter="url(#soft)" />
      </g>
      <path
        d="M882 1232 L979 1191 L1152 1118 L1400 1010 L1600 928 L1829 847 L2002 780 L2080 754 L2146 737 L2370 989"
        stroke="#27453c"
        strokeWidth="2"
        opacity="0.7"
      />
      <path d="M882 1232 Q848 1250 840 1276 Q834 1296 850 1316 L976 1456" stroke="#00003c" strokeWidth="3" />

      {/* undeformed outline */}
      <path
        d="M2114 1064 L1910 1117 L1686 1189 L1600 1218 L1392 1279 L1131 1361 Q1100 1373 1070 1373 Q1010 1374 973 1341 L879 1236 L838 1189 Q826 1148 851 1133 L979 1084 L1203 1017 L1400 959 L1600 901 L1788 841 L2002 780"
        stroke="#bfa878"
        strokeWidth="3"
        opacity="0.7"
      />

      {/* fixtures */}
      <Clamp dx={0} dy={0} />
      <Clamp dx={9} dy={329} />
      {cones.map(([x, y]) => (
        <use key={`${x}-${y}`} href="#cone" x={x} y={y} />
      ))}
      <path d="M2372 1078 L2376 1090 M2374 1100 L2377 1120" stroke="#4d9a52" strokeWidth="7" strokeLinecap="round" />
      <path d="M2134 1459 Q2144 1448 2152 1456 L2150 1466 Q2140 1468 2134 1459 Z" fill="#1f8a28" />
      <path d="M2141 1505 L2153 1500 V1510 Z M2164 1571 L2174 1566 L2176 1574 Z" fill="#173f1b" />
      <path d="M2180 1618 Q2190 1606 2200 1616 Q2190 1626 2180 1618 Z" fill="#2aa233" />
      <path d="M2203 1628 L2214 1634 L2222 1646 Q2218 1660 2206 1654 Q2200 1646 2210 1642 Z" fill="#24992c" />
      <path d="M2394 1722 L2412 1716 M2384 1768 L2398 1752 L2408 1760 M2350 1800 L2362 1790 M2372 1812 L2382 1788 L2396 1772 M2388 1806 L2376 1786" stroke="#1e9a24" strokeWidth="14" strokeLinecap="round" />
      <path d="M2342 1788 L2350 1794 M2344 1806 L2358 1804 M2364 1818 L2378 1818 M2384 1806 L2394 1806 M2390 1764 L2396 1760 M2374 1796 L2384 1798" stroke="#35c838" strokeWidth="7" strokeLinecap="round" />
      <path d="M2366 1794 L2360 1808 M2388 1780 L2382 1792 M2400 1764 L2394 1770" stroke="#0c5212" strokeWidth="3" />

      {/* loads */}
      <path d="M2116 776 L2118 826" stroke="#7a2430" strokeWidth="7" strokeLinecap="round" />
      {forces.map(([x, y]) => (
        <use key={`${x}-${y}`} href="#force" x={x} y={y + 2} />
      ))}

      {/* cursor */}
      <rect x="2142" y="856" width="32" height="32" fill="#4fa0ba" stroke="#5d7468" strokeWidth="3" />
      <path d="M2146 860 H2160 L2146 874 Z" fill="#8cc7d6" />
      <path d="M2109 821 V857 L2117 850 L2124 862 L2130 858 L2124 847 L2133 845 Z" fill="#fff" stroke="#4d3b32" strokeWidth="2" />

      {/* legend */}
      <rect x="2786" y="562" width="6" height="960" fill="url(#legend)" />
      <path d="M2785 469 L2791 476" stroke="#777" strokeWidth="3" />
      {[1294, 1594].map((y) => (
        <g key={y}>
          <path d={`M2720 ${y} H2764`} stroke="#8a5a5a" strokeWidth="3" />
          <path d={`M2762 ${y - 14} L2786 ${y} L2762 ${y + 14} Z`} fill="#d8210e" stroke="#6b2a20" strokeWidth="2" />
        </g>
      ))}

      {/* triad */}
      <path d="M743 1818 L754 1831 L764 1818 M754 1831 V1852" stroke="#8f958f" strokeWidth="4" />
      <path d="M754 1846 L762 1856 H746 Z" fill="#1c4a24" />
    </svg>
  );
}

const ribbonCarets = ["w-[124px]", "w-[422px]", "w-[358px]", "w-[364px]", "w-[554px]", "w-[330px]"];

export default function App() {
  return (
    <div className="flex h-screen flex-col overflow-hidden bg-white font-['Noto_Sans',sans-serif] text-[#565656]">
      <header className="flex h-[34px] shrink-0 border-t-[5px] border-[#999] bg-linear-to-b from-white via-[#f3f3f3] to-white">
        {ribbonCarets.map((w) => (
          <span key={w} className={"flex shrink-0 justify-end " + w}>
            <svg viewBox="0 0 16 10" className="-mt-[5px] -mr-2 h-2.5 w-4" aria-hidden="true">
              <path d="M2 0 H14 L8 10 Z" fill="#222" />
            </svg>
          </span>
        ))}
        <span className="ml-[162px] w-[209px] bg-[#a9a9a9]" />
      </header>

      <nav aria-label="Administrador de comandos" className="flex h-[72px] shrink-0">
        {tabs.map((t) => (
          <button
            key={t.label}
            type="button"
            className={
              "shrink-0 border-t-4 border-b-[5px] text-[33px] leading-none whitespace-nowrap " +
              t.width +
              (t.active
                ? " border-t-[#f8f8f8] border-b-[#b9b9b9] bg-[#f8f8f8] font-bold text-[#444]"
                : " border-r-2 border-t-[#b5b5b5] border-r-[#9c9c9c] border-b-[#adadad] bg-[#d3d3d3]")
            }
          >
            {t.label}
          </button>
        ))}
        <span className="flex-1 border-t-4 border-[#c4c4c4]" />
      </nav>

      <div className="flex min-h-0 flex-1">
        <aside className="relative flex w-[636px] shrink-0 flex-col border-r-4 border-[#b3b3b3] bg-[#f5f5f5]">
          <div className="flex h-[66px] shrink-0 items-center justify-center border-b-2 border-[#e4e4e4] pr-3">
            <Grip />
          </div>

          <div className="flex h-[66px] shrink-0 items-stretch border-b-4 border-[#c6c6c6]">
            {managerTabs.map((t, i) => (
              <button
                key={t.name}
                type="button"
                aria-label={t.name}
                className={
                  "flex items-center justify-center border-t-[3px] border-[#a9a9a9] " +
                  t.width +
                  (i === 0 ? " bg-[#fbfbfb]" : " border-r-2 bg-[#d0d0d0]")
                }
              >
                {t.icon}
              </button>
            ))}
            <button type="button" aria-label="Más pestañas" className="ml-auto flex items-center pr-3">
              <Chevron d="M8 2 L17 12 L8 22" />
            </button>
          </div>

          <label className="mr-2 flex h-[75px] shrink-0 items-center border-r-2 border-b-4 border-[#dcdcdc] pl-1">
            <Funnel />
            <input aria-label="Filtrar operaciones" className="min-w-0 flex-1 bg-transparent px-2 text-[33px] outline-none" />
          </label>

          <div className="flex h-[326px] shrink-0 pr-1">
            <div className="min-w-0 flex-1 overflow-hidden border-b-[3px] border-[#8ea5a5]">
              <Tree nodes={features} name="Operaciones" className="h-[336px]" />
            </div>
            <div className="flex w-[38px] flex-col items-center justify-between bg-[#efefef] py-2">
              <Chevron d="M3 17 L12 7 L21 17" />
              <span className="mt-28 h-[90px] w-full bg-[#c9c9c9]" />
              <Chevron d="M3 7 L12 17 L21 7" />
            </div>
          </div>

          <div className="flex h-[60px] shrink-0 items-center border-b-4 border-[#cbcbcb] bg-[#f0f0f0]">
            <Chevron d="M17 2 L8 12 L17 22" />
            <span className="mb-2 ml-4 h-11 w-[236px] bg-[#c9c9c9]" />
            <span className="ml-auto flex pr-[60px]">
              <Chevron d="M8 2 L17 12 L8 22" />
            </span>
          </div>

          <div className="flex h-[36px] shrink-0 items-center justify-center border-b-4 border-[#cbcbcb] pr-3">
            <Grip />
          </div>

          <label className="mr-2 flex h-[75px] shrink-0 items-center border-r-2 border-b-4 border-[#dcdcdc] pl-1">
            <Funnel />
            <span className="mt-5 size-2.5 rounded-full bg-[#7b7a5c]" />
            <input aria-label="Filtrar estudio" className="min-w-0 flex-1 bg-transparent px-2 text-[33px] outline-none" />
          </label>

          <div className="shrink-0 overflow-hidden">
            <Tree nodes={study} name="Estudio" className="h-[735px]" />
          </div>

          <button
            type="button"
            aria-label="Ocultar panel"
            className="absolute top-[897px] left-[632px] z-10 flex h-[114px] w-[30px] items-center justify-center border-4 border-l-0 border-[#c3c3c3] bg-[#f5f5f5]"
          >
            <Grip />
          </button>
        </aside>

        <main className="relative min-w-0 flex-1 bg-white">
          <StressPlot />
          <div className="relative flex items-start">
            <div className="w-[918px] shrink-0 pt-[19px] pl-[47px] text-[29px] leading-10 whitespace-nowrap text-[#4a4a4a]">
              <p>Nombre del modelo:Platina</p>
              <p>Nombre de estudio:Análisis estático 2(-Predeterminado-)</p>
              <p>Tipo de resultado: Análisis estático tensión nodal Tensiones1</p>
              <p>Escala de deformación: 1,5674</p>
            </div>
            <div role="toolbar" aria-label="Ver" className="flex items-center pt-2.5">
              {viewTools.map((t) => (
                <button key={t.name} type="button" aria-label={t.name} className="flex items-center">
                  <span className="flex w-[61px] justify-center">{t.icon}</span>
                  {t.menu && (
                    <span className="flex w-[34px] justify-center">
                      <svg viewBox="0 0 12 12" className="size-3" aria-hidden="true">
                        <path d="M1 2 H11 L6 10 Z" fill="#9a9a9a" />
                      </svg>
                    </span>
                  )}
                </button>
              ))}
            </div>
          </div>
        </main>
      </div>

      <footer className="h-1.5 shrink-0 bg-[#999]" />
    </div>
  );
}
